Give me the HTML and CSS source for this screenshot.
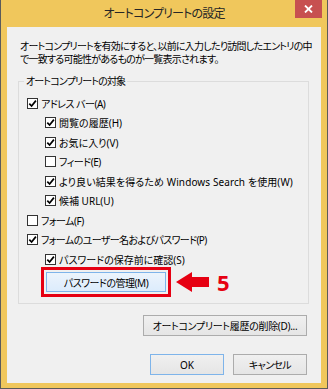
FILE: index.html
```html
<!DOCTYPE html>
<html lang="ja">
<head>
  <meta charset="UTF-8" />
  <title>オートコンプリートの設定</title>
  <link rel="stylesheet" href="styles.css">
</head>
<body>

  <div class="window">
    <div class="titlebar">
      <span></span>
      <div class="title">オートコンプリートの設定</div>
      <div class="close">
        <svg width="9" height="8" viewBox="0 0 9 8">
          <path d="M1 0.5 L8 7.5 M8 0.5 L1 7.5" stroke="#fff" stroke-width="1.8" />
        </svg>
      </div>
    </div>

    <div class="content">
      <p class="intro">オートコンプリートを有効にすると、以前に入力したり訪問したエントリの中<br>で一致する可能性があるものが一覧表示されます。</p>

      <fieldset class="group">
        <legend class="tight-xl">オートコンプリートの対象</legend>

        <div class="row tight-m"><span class="check on"></span>アドレス バー(A)</div>
        <div class="row sub"><span class="check on"></span>閲覧の履歴(H)</div>
        <div class="row sub"><span class="check on"></span>お気に入り(V)</div>
        <div class="row sub tight-m"><span class="check"></span>フィード(E)</div>
        <div class="row sub loose"><span class="check on"></span>より良い結果を得るため Windows Search を使用(W)</div>
        <div class="row sub"><span class="check on"></span>候補 URL(U)</div>
        <div class="row tight-m"><span class="check"></span>フォーム(F)</div>
        <div class="row tight-l"><span class="check on"></span>フォームのユーザー名およびパスワード(P)</div>
        <div class="row sub"><span class="check on"></span>パスワードの保存前に確認(S)</div>

        <div class="manage-row">
          <div class="highlight">
            <button class="btn btn-hot tight-m">パスワードの管理(M)</button>
          </div>
          <svg class="arrow" width="33" height="20" viewBox="0 0 33 20">
            <path d="M0 10 L16 0 L16 5 L33 5 L33 15 L16 15 L16 20 Z" fill="#e60012" />
          </svg>
          <span class="step">5</span>
        </div>
      </fieldset>

      <div class="tools">
        <button class="btn btn-wide tight-s">オートコンプリート履歴の削除(D)...</button>
      </div>

      <div class="actions">
        <button class="btn btn-default">OK</button>
        <button class="btn tight-l">キャンセル</button>
      </div>
    </div>
  </div>

</body>
</html>
```

FILE: styles.css
```css
* {
  box-sizing: border-box;
  margin: 0;
  padding: 0;
}

body {
  font-family: "Noto Sans", "Noto Sans CJK JP", sans-serif;
  font-size: 10px;
  font-feature-settings: "palt";
  color: #000;
  background: #f0f0f0;
}

.tight-s { letter-spacing: -0.3px; }
.tight-m { letter-spacing: -0.5px; }
.tight-l { letter-spacing: -0.62px; }
.tight-xl { letter-spacing: -0.85px; }
.loose { letter-spacing: 0.1px; }

.window {
  width: 328px;
  height: 389px;
  background: #f0c75c;
  border: 1px solid #5b5b5b;
  border-top: 0;
  padding: 0 6px 5px;
  display: flex;
  flex-direction: column;
}

/* Title bar */
.titlebar {
  height: 27px;
  margin: 0 -6px;
  display: grid;
  grid-template-columns: 1fr auto 1fr;
}

.title {
  font-size: 12px;
  line-height: 28px;
  letter-spacing: -0.85px;
  color: #262626;
}

.close {
  justify-self: end;
  width: 27px;
  height: 18px;
  margin-right: 5px;
  background: #c75050;
  display: flex;
  align-items: center;
  justify-content: center;
}

/* Client area */
.content {
  flex: 1;
  background: #f0f0f0;
  padding-top: 12.5px;
}

.intro {
  margin-left: 13px;
  line-height: 13px;
  letter-spacing: -0.75px;
  white-space: nowrap;
}

.group {
  margin: 9px 12px 0 11px;
  border: 1px solid #dcdcdc;
  padding: 6px 0 6px;
}

.group legend {
  margin-left: 5px;
  padding: 0 2px;
  line-height: 13px;
}

.row {
  height: 19.5px;
  display: flex;
  align-items: center;
  gap: 3px;
  padding-left: 8px;
  white-space: nowrap;
}

.row.sub {
  padding-left: 26px;
}

.check {
  width: 11px;
  height: 11px;
  flex: none;
  border: 1px solid #333;
  background: #fff;
}

.check.on {
  background: #fff url("data:image/svg+xml,%3Csvg xmlns='http://www.w3.org/2000/svg' width='9' height='9'%3E%3Cpath d='M1.3 4.6 L3.6 7 L7.9 1.6' fill='none' stroke='%23000' stroke-width='1.7'/%3E%3C/svg%3E") center / 9px 9px no-repeat;
}

.manage-row {
  display: flex;
  align-items: center;
  margin-top: -2px;
  padding-left: 22px;
}

.highlight {
  border: 3px solid #e60012;
  padding: 2px;
}

.arrow {
  margin-left: 5px;
}

.step {
  margin-left: 8px;
  font-size: 22px;
  font-weight: bold;
  line-height: 1;
  color: #e60012;
}

/* Buttons */
.btn {
  font: inherit;
  height: 21px;
  width: 74px;
  border: 1px solid #acacac;
  background: linear-gradient(#f0f0f0, #e5e5e5);
  color: #000;
}

.btn-hot {
  width: 120px;
  height: 20px;
  border-color: #7eb4ea;
  background: linear-gradient(#ecf4fc, #dcecfc);
}

.btn-wide {
  width: 164px;
}

.btn-default {
  border-color: #7eb4ea;
}

.tools {
  display: flex;
  justify-content: flex-end;
  margin: 11px 14px 0 0;
}

.actions {
  display: flex;
  justify-content: flex-end;
  gap: 9px;
  margin: 18px 14px 0 0;
}
```
